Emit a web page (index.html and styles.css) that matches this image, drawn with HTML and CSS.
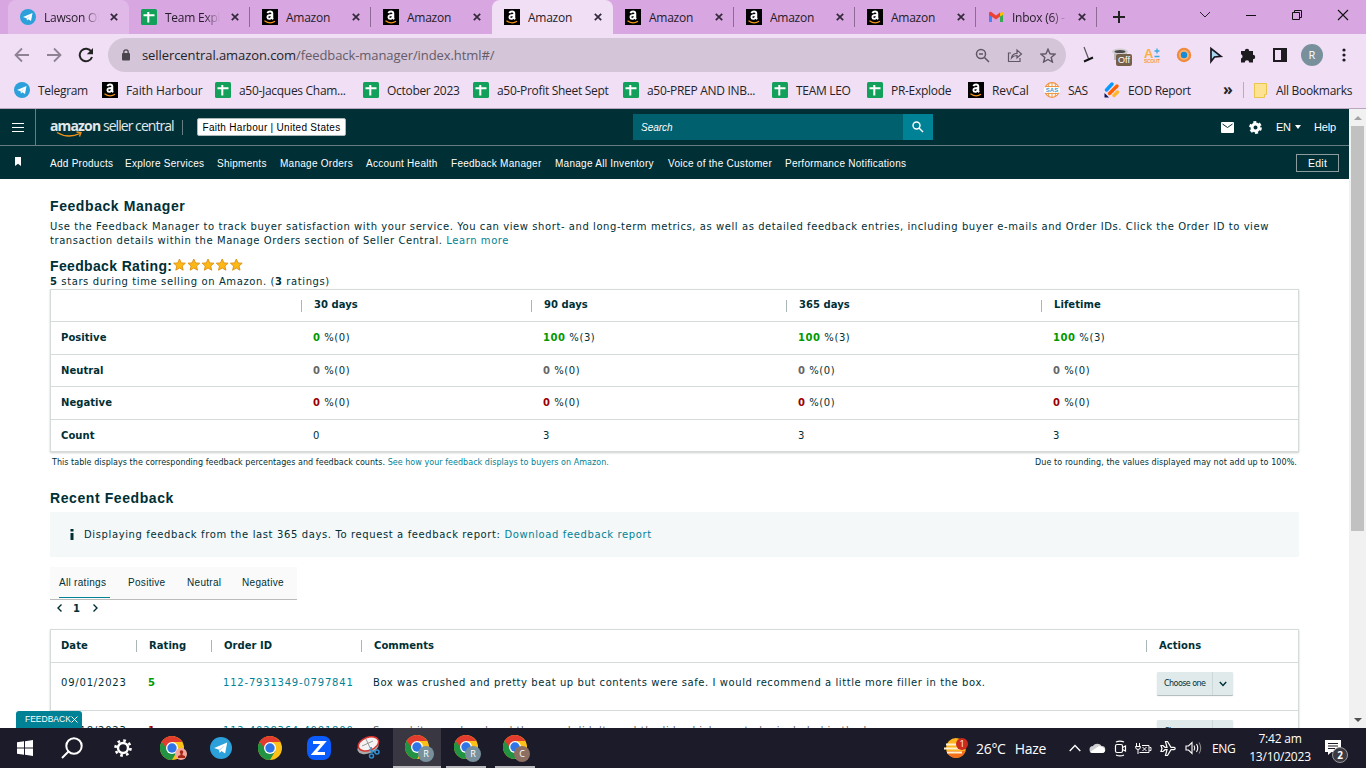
FILE: index.html
```
<!doctype html>
<html lang="en">
  <head>
    <meta charset="utf-8">
    <title>Feedback Manager</title>
    <link rel="stylesheet" href="styles.css">
  </head>
  <body>
    <!-- shared icons -->
    <svg class="defs" width="0" height="0">
      <symbol id="telegram" viewBox="0 0 16 16">
        <circle cx="8" cy="8" r="8" fill="#2ba0da"/>
        <path d="M3 8 L12.5 4 L11 12 L8.3 10.2 L7 11.6 L6.6 9.2 Z" fill="#fff"/>
        <path d="M6.6 9.2 L10.8 5.8 L7.4 9.6 Z" fill="#a9cfe6"/>
      </symbol>
      <symbol id="sheet" viewBox="0 0 16 16">
        <rect width="16" height="16" rx="1.5" fill="#12a05a"/>
        <path d="M2.5 6.2h11M7.3 3v10.5" stroke="#fff" stroke-width="2"/>
      </symbol>
      <symbol id="amz" viewBox="0 0 16 16">
        <rect width="16" height="16" fill="#000"/>
        <path d="M5.4 4.1Q6 2.5 8 2.5Q10.3 2.5 10.3 4.6V8.6Q10.3 9.6 11.2 10.2M10 6Q5.4 5.8 5.4 8.2Q5.6 10 7.4 9.9Q9.8 9.5 10 6.6" fill="none" stroke="#fff" stroke-width="1.9"/>
        <path d="M2.5 11.7Q8 15.6 13 12.2" fill="none" stroke="#f39418" stroke-width="1.2"/>
      </symbol>
      <symbol id="gmail" viewBox="0 0 16 12">
        <path d="M1 1.5V11h3V5z" fill="#4285f4"/>
        <path d="M15 1.5V11h-3V5z" fill="#34a853"/>
        <path d="M12 5.5V2.2L14 .8Q15 .8 15 2.5V4z" fill="#fbbc04"/>
        <path d="M1 4V2Q1.5 .3 3 .8L8 4.6 12 1.6V5.4L8 8.4z" fill="#ea4335"/>
      </symbol>
      <symbol id="close" viewBox="0 0 8 8">
        <path d="M.8.8l6.4 6.4M7.2.8L.8 7.2" stroke="#33293a" stroke-width="1.7"/>
      </symbol>
      <symbol id="chrome" viewBox="0 0 24 24">
        <circle cx="12" cy="12" r="12" fill="#fbc116"/>
        <path d="M1.6 6L6.8 15H12V6H22.4Q18 0 12 0Q5 0 1.6 6" fill="#e33b2e"/>
        <path d="M1.6 6A12 12 0 0 0 12 24L17.2 15 12 12H6.5z" fill="#229342"/>
        <circle cx="12" cy="12" r="6" fill="#fff"/>
        <circle cx="12" cy="12" r="4.7" fill="#2f75e8"/>
      </symbol>
    </svg>

    <div class="tabstrip">
      <div class="tab hover"><svg class="fav"><use href="#telegram"/></svg><span class="fade">Lawson Oh</span><svg class="x"><use href="#close"/></svg></div>
      <div class="tab line"><svg class="fav"><use href="#sheet"/></svg><span class="fade">Team Expl</span><svg class="x"><use href="#close"/></svg></div>
      <div class="tab line"><svg class="fav"><use href="#amz"/></svg><span>Amazon</span><svg class="x"><use href="#close"/></svg></div>
      <div class="tab"><svg class="fav"><use href="#amz"/></svg><span>Amazon</span><svg class="x"><use href="#close"/></svg></div>
      <div class="tab active"><svg class="fav"><use href="#amz"/></svg><span>Amazon</span><svg class="x"><use href="#close"/></svg></div>
      <div class="tab line"><svg class="fav"><use href="#amz"/></svg><span>Amazon</span><svg class="x"><use href="#close"/></svg></div>
      <div class="tab line"><svg class="fav"><use href="#amz"/></svg><span>Amazon</span><svg class="x"><use href="#close"/></svg></div>
      <div class="tab line"><svg class="fav"><use href="#amz"/></svg><span>Amazon</span><svg class="x"><use href="#close"/></svg></div>
      <div class="tab line"><svg class="fav gm"><use href="#gmail"/></svg><span class="fade">Inbox (6) -</span><svg class="x"><use href="#close"/></svg></div>
      <svg class="plus" width="12" height="12"><path d="M6 0v12M0 6h12" stroke="#222" stroke-width="2"/></svg>
      <div class="winbtns">
        <svg width="12" height="12"><path d="M1 3l5 5 5-5" fill="none" stroke="#222"/></svg>
        <svg width="12" height="12"><path d="M1 6.5h10" stroke="#111"/></svg>
        <svg width="12" height="12"><path d="M1.5 3.5h7v7h-7zM3.5 3.5v-2h7v7h-2" fill="none" stroke="#111"/></svg>
        <svg width="12" height="12"><path d="M1 1l10 10M11 1L1 11" stroke="#111" stroke-width="1.1"/></svg>
      </div>
    </div>

    <div class="toolbar">
      <div class="navbtns">
        <svg width="16" height="16" fill="none" stroke="#8f8295" stroke-width="1.8"><path d="M15 8H2M8 1.5L1.5 8 8 14.5"/></svg>
        <svg width="16" height="16" fill="none" stroke="#8f8295" stroke-width="1.8"><path d="M1 8h13M8 1.5L14.5 8 8 14.5"/></svg>
        <svg width="16" height="16"><path d="M13.3 4.5A6.3 6.3 0 1 0 14 10" fill="none" stroke="#222" stroke-width="2"/><path d="M15 1v6.2H8.800z" fill="#222"/></svg>
      </div>
      <div class="omnibox">
        <svg class="lock" width="8" height="12"><rect y="4" width="8" height="7.5" rx="1" fill="#4b4550"/><path d="M1.800 5V3a2.200 2.200 0 0 1 4.400 0v2" fill="none" stroke="#4b4550" stroke-width="1.3"/></svg>
        <div class="url">sellercentral.amazon.com<span>/feedback-manager/index.html#/</span></div>
        <div class="omniicons">
          <svg width="15" height="15" fill="none" stroke="#5f5765" stroke-width="1.5"><circle cx="6" cy="6" r="4.5"/><path d="M9.500 9.500L14 14M4 6h4"/></svg>
          <svg width="16" height="15" fill="none" stroke="#5f5765" stroke-width="1.2"><path d="M4 5H1.500V13.500H13V10M4.500 10Q5 5.500 10 5.300V2L14.500 6 10 10V7.500Q6.500 7.500 4.500 10z"/></svg>
          <svg width="16" height="15" fill="none" stroke="#5f5765" stroke-width="1.4"><path d="M8 1.200L10 5.800 15 6.200 11.200 9.500 12.400 14 8 11.500 3.600 14 4.800 9.500 1 6.200 6 5.800z"/></svg>
        </div>
      </div>
      <div class="exts">
        <svg width="16" height="18"><path d="M4 1l5 13" stroke="#555" stroke-width="1.2"/><path d="M4 15.500l9-4" stroke="#111" stroke-width="2"/></svg>
        <div class="offext">
          <svg width="18" height="16"><path d="M3 5h13v8H3z" fill="#bcb9ba"/><ellipse cx="9" cy="4.5" rx="8" ry="3" fill="#cfcdcd"/><ellipse cx="9" cy="4.5" rx="5.5" ry="1.6" fill="#4a484c"/></svg>
          <b>Off</b>
        </div>
        <svg width="16" height="16"><text x="0" y="10.500" class="sc1">A</text><path d="M10.500 4h5M13 1.500v5M10.500 9.500h5" stroke="#39a9e0" stroke-width="1.3"/><text x="0" y="15.500" class="sc2" textLength="16">SCOUT</text></svg>
        <svg width="16" height="16"><circle cx="8" cy="8" r="7.2" fill="#f08a3c"/><circle cx="8" cy="8" r="5" fill="#fbb26c"/><circle cx="8" cy="8" r="3.2" fill="#168cd8"/></svg>
        <svg width="16" height="18"><path d="M3 2.500V15.500L6.500 11 13 10.300z" fill="#a9d8f3" stroke="#1b1720" stroke-width="1.7"/></svg>
        <svg width="16" height="16"><path d="M1 4h3.800a2.200 2.200 0 1 1 4.400 0H13v3.800a2.200 2.200 0 1 1 0 4.400V15.500H9.200a2.200 2.200 0 0 0-4.400 0H1v-4a2.200 2.200 0 0 0 0-4.200z" fill="#1d1b20"/></svg>
        <svg width="14" height="14"><path d="M1 1h12v12H1z" fill="none" stroke="#1d1b20" stroke-width="2"/><path d="M8 1h5v12H8z" fill="#1d1b20"/></svg>
        <div class="avatar">R</div>
        <svg width="4" height="14" fill="#1d1b20"><circle cx="2" cy="2" r="1.6"/><circle cx="2" cy="7" r="1.6"/><circle cx="2" cy="12" r="1.6"/></svg>
      </div>
    </div>

    <div class="bookmarks">
      <div><svg class="fav"><use href="#telegram"/></svg>Telegram</div>
      <div><svg class="fav"><use href="#amz"/></svg>Faith Harbour</div>
      <div><svg class="fav"><use href="#sheet"/></svg>a50-Jacques Cham...</div>
      <div><svg class="fav"><use href="#sheet"/></svg>October 2023</div>
      <div><svg class="fav"><use href="#sheet"/></svg>a50-Profit Sheet Sept</div>
      <div><svg class="fav"><use href="#sheet"/></svg>a50-PREP AND INB...</div>
      <div><svg class="fav"><use href="#sheet"/></svg>TEAM LEO</div>
      <div><svg class="fav"><use href="#sheet"/></svg>PR-Explode</div>
      <div><svg class="fav"><use href="#amz"/></svg>RevCal</div>
      <div><svg class="fav" viewBox="0 0 16 16"><circle cx="8" cy="8" r="7.3" fill="#fff" stroke="#ef9443" stroke-width="1.2"/><path d="M1.500 4.500h13M1.500 11.500h13M8 1v14M5 1.500Q2.500 8 5 14.500M11 1.500Q13.500 8 11 14.500" fill="none" stroke="#ef9443"/><rect y="5.3" width="16" height="5.4" fill="#fff"/><text x="8" y="10.200" text-anchor="middle" class="sas">SAS</text></svg>SAS</div>
      <div><svg class="fav" viewBox="0 0 16 16"><g stroke-width="3.4" stroke-linecap="round"><path d="M2.500 8L8 2" stroke="#0a99ff"/><path d="M5.500 11.500L13 4" stroke="#ff6100"/><path d="M10 13.500L13.500 10" stroke="#ffb629"/></g><path d="M.5 11v4.500H5z" fill="#0a1551"/></svg>EOD Report</div>
      <div class="more">»</div>
      <div class="allbm"><svg width="13" height="15"><path d="M.5.5h12v11h-2v3H.5z" fill="#fde293" stroke="#e9c74d"/></svg>All Bookmarks</div>
    </div>

    <div class="view">
      <div class="page">
        <header>
          <div class="burger"><svg width="12" height="9"><path d="M0 .5h12M0 4.500h12M0 8.500h12" stroke="#fff"/></svg></div>
          <div class="brand">
            <div class="logo"><b>amazon</b> <span>seller central</span>
              <svg class="smile" width="28" height="7"><path d="M1 1.500Q12 8 24 2.500M20.500 1L25 1.500 23.500 5.500" fill="none" stroke="#f39418" stroke-width="1.3"/></svg>
            </div>
            <div class="bar"></div>
            <div class="account">Faith Harbour | United States</div>
          </div>
          <div class="search">
            <div class="field">Search</div>
            <div class="go"><svg width="12" height="12" fill="none" stroke="#fff" stroke-width="1.4"><circle cx="4.5" cy="4.5" r="3.5"/><path d="M7 7l4 4"/></svg></div>
          </div>
          <div class="tools">
            <svg width="13" height="11"><rect width="13" height="11" rx="1" fill="#fff"/><path d="M1.500 2L6.500 5.500 11.500 2" fill="none" stroke="#002f36"/></svg>
            <svg width="13" height="13"><circle cx="6.5" cy="6.5" r="3.5" fill="none" stroke="#fff" stroke-width="3"/><circle cx="6.5" cy="6.5" r="5.4" fill="none" stroke="#fff" stroke-width="2" stroke-dasharray="3 2.65"/></svg>
            <span class="lang">EN <i></i></span>
            <span class="help">Help</span>
          </div>
        </header>
        <nav>
          <div class="flag"><svg width="6" height="9"><path d="M0 0h6v9L3 6.800 0 9z" fill="#fff"/></svg></div>
          <div class="links">
            <a>Add Products</a><a>Explore Services</a><a>Shipments</a><a>Manage Orders</a><a>Account Health</a><a>Feedback Manager</a><a>Manage All Inventory</a><a>Voice of the Customer</a><a>Performance Notifications</a>
          </div>
          <div class="edit">Edit</div>
        </nav>

        <main>
          <h1>Feedback Manager</h1>
          <p class="intro">Use the Feedback Manager to track buyer satisfaction with your service. You can view short- and long-term metrics, as well as detailed feedback entries, including buyer e-mails and Order IDs. Click the Order ID to view<br>transaction details within the Manage Orders section of Seller Central. <a>Learn more</a></p>
          <h2 class="rating">Feedback Rating:
            <svg width="70" height="14" viewBox="0 0 70 14"><g fill="#fdb813" stroke="#dd8f12" stroke-width=".9">
              <path id="star" d="M6.500 1L8.200 4.900 12.400 5.200 9.200 8 10.200 12.200 6.500 10 2.800 12.200 3.800 8 .6 5.200 4.800 4.900z"/>
              <use href="#star" x="14.3"/><use href="#star" x="28.5"/><use href="#star" x="42.7"/><use href="#star" x="56.8"/>
            </g></svg>
          </h2>
          <p class="stars"><b>5</b> stars during time selling on Amazon. (<b>3</b> ratings)</p>

          <table class="stats">
            <colgroup><col class="s0"><col class="s1"><col class="s2"><col class="s2"><col></colgroup>
            <tr><th></th><th>30 days</th><th>90 days</th><th>365 days</th><th>Lifetime</th></tr>
            <tr><td><b>Positive</b></td><td><b class="pos">0</b> %(0)</td><td><b class="pos">100</b> %(3)</td><td><b class="pos">100</b> %(3)</td><td><b class="pos">100</b> %(3)</td></tr>
            <tr><td><b>Neutral</b></td><td><b class="neu">0</b> %(0)</td><td><b class="neu">0</b> %(0)</td><td><b class="neu">0</b> %(0)</td><td><b class="neu">0</b> %(0)</td></tr>
            <tr><td><b>Negative</b></td><td><b class="neg">0</b> %(0)</td><td><b class="neg">0</b> %(0)</td><td><b class="neg">0</b> %(0)</td><td><b class="neg">0</b> %(0)</td></tr>
            <tr><td><b>Count</b></td><td>0</td><td>3</td><td>3</td><td>3</td></tr>
          </table>
          <div class="notes">
            <span>This table displays the corresponding feedback percentages and feedback counts. <a>See how your feedback displays to buyers on Amazon.</a></span>
            <span class="round">Due to rounding, the values displayed may not add up to 100%.</span>
          </div>

          <h2 class="recent">Recent Feedback</h2>
          <div class="info"><svg width="4" height="11"><path d="M.5 0h3v2.500h-3zM.5 4h3v7h-3z" fill="#002f36"/></svg><span>Displaying feedback from the last 365 days. To request a feedback report: <a>Download feedback report</a></span></div>
          <div class="filters"><a class="on">All ratings</a><a>Positive</a><a>Neutral</a><a>Negative</a></div>
          <div class="pager">
            <svg width="5" height="8"><path d="M4.500.5L1 4l3.500 3.500" fill="none" stroke="#002f36" stroke-width="1.4"/></svg>
            <b>1</b>
            <svg width="5" height="8"><path d="M.5.5L4 4 .5 7.500" fill="none" stroke="#002f36" stroke-width="1.4"/></svg>
          </div>

          <table class="feedback">
            <colgroup><col class="f0"><col class="f1"><col class="f2"><col class="f3"><col></colgroup>
            <tr><th>Date</th><th>Rating</th><th>Order ID</th><th>Comments</th><th>Actions</th></tr>
            <tr><td class="num">09/01/2023</td><td><b class="pos">5</b></td><td class="num"><a>112-7931349-0797841</a></td><td>Box was crushed and pretty beat up but contents were safe. I would recommend a little more filler in the box.</td>
              <td><div class="choose"><span>Choose one</span><i><svg width="8" height="6"><path d="M.8 1L4 4.500 7.200 1" fill="none" stroke="#002f36" stroke-width="1.4"/></svg></i></div></td></tr>
            <tr><td class="num">08/18/2023</td><td><b class="neg">1</b></td><td class="num"><a>112-4028364-4081800</a></td><td class="neu">Second item ordered and they send didn't send the lid, which was to be included in the box.</td>
              <td><div class="choose"><span>Choose one</span><i></i></div></td></tr>
          </table>
        </main>
        <div class="fbtab">FEEDBACK <svg width="7" height="7"><path d="M.5.5l6 6M6.500.5l-6 6" stroke="#fff"/></svg></div>
      </div>
      <div class="scroll"><i class="up"></i><div class="thumb"></div><i class="down"></i></div>
    </div>

    <div class="taskbar">
      <div class="apps">
        <div><svg width="16" height="16" fill="#fff"><path d="M0 2.300l7-1v6.200H0zM8 1.200L16 0v7.500H8zM0 8.500h7v6.200l-7-1zM8 8.500h8V16l-8-1.200z"/></svg></div>
        <div class="find"><svg width="22" height="22" fill="none" stroke="#fff" stroke-width="2"><circle cx="13" cy="9" r="7.7"/><path d="M7.500 14.500L1 21"/></svg></div>
        <div><svg width="18" height="18" viewBox="0 0 18 18"><circle cx="9" cy="9" r="5" fill="none" stroke="#fff" stroke-width="2.4"/><circle cx="9" cy="9" r="7.5" fill="none" stroke="#fff" stroke-width="2.6" stroke-dasharray="2.7 3.19"/></svg></div>
        <div class="app"><svg width="24" height="24"><use href="#chrome"/></svg><em class="red"><svg width="7" height="8" fill="#a52714"><circle cx="3.5" cy="2" r="1.8"/><path d="M2.500 3h2v2L7 6v2H0V6l2.500-1z"/></svg></em></div>
        <div><svg width="22" height="22"><use href="#telegram"/></svg></div>
        <div><svg width="24" height="24"><use href="#chrome"/></svg></div>
        <div><svg width="24" height="24"><rect width="24" height="24" rx="8" fill="#0b5cff"/><path d="M6 6.500H16.500L7 17.500H18" fill="none" stroke="#fff" stroke-width="3"/></svg></div>
        <div><svg width="24" height="24"><ellipse cx="12" cy="11" rx="11" ry="6.5" fill="#aaa" transform="rotate(-20 12 11)"/><ellipse cx="12.5" cy="8" rx="10.5" ry="6.5" fill="#f4f2f2" stroke="#d9342f" stroke-width="1.5" transform="rotate(-20 12 8)"/><path d="M10 3l6 13M6 10l11-5" stroke="#999"/><g fill="none" stroke="#2f8fd0" stroke-width="1.5"><path d="M13 14l6 2M15 11l1 6"/><circle cx="21" cy="16" r="2"/><circle cx="15.5" cy="20" r="2"/></g></svg></div>
        <div class="app cur"><svg width="24" height="24"><use href="#chrome"/></svg><em>R</em></div>
        <div class="app open"><svg width="24" height="24"><use href="#chrome"/></svg><em>R</em></div>
        <div class="app open"><svg width="24" height="24"><use href="#chrome"/></svg><em class="brown">C</em></div>
      </div>
      <div class="weather">
        <svg width="26" height="22"><circle cx="12" cy="11" r="10" fill="#ffb51e"/><path d="M2.500 14a10 10 0 0 0 19 0z" fill="#f2701c"/><path d="M2 7.500h12M0 11.500h17M3 15.500h15" stroke="#fff0cf" stroke-width="1.8"/><circle cx="18" cy="7" r="6" fill="#cb2a1e"/><text x="18" y="10" text-anchor="middle" class="one">1</text></svg>
        <span>26°C</span><span>Haze</span>
      </div>
      <div class="tray">
        <svg width="12" height="8"><path d="M.7 7L6 1.500 11.300 7" fill="none" stroke="#fff" stroke-width="1.3"/></svg>
        <svg width="17" height="12"><path d="M4 11a3.500 3.500 0 0 1 0-7A5 5 0 0 1 12.500 4 3.500 3.500 0 0 1 13 11z" fill="#cfcfd2"/><path d="M1 10L10 4Q16 5 16 9 15.500 11 13 11H4Q2 11 1 10z" fill="#fff"/></svg>
        <svg width="13" height="17" fill="none" stroke="#fff" stroke-width="1.2"><rect x="1.5" y="4.5" width="7" height="8" rx="1.5"/><path d="M8.500 7.500l3-1.500v5l-3-1.500M2 2Q6 .2 10 2M2 15Q6 16.800 10 15"/></svg>
        <svg width="17" height="13" fill="none" stroke="#fff"><path d="M7 3.500H14v7H4.500M14.500 5.500h1.500v3h-1.500M7.500 5l4 4M11.500 5L7.500 9M1.500 1v3M4.500 1v3M.5 4.500h5Q5.500 7.500 3 7.500 .5 7.500 .5 4.500M3 7.500V12" /></svg>
        <svg width="17" height="17" fill="none" stroke="#fff" stroke-width="1.2"><path d="M1 5.500h2L5 7.300H7L5.500 1.500H7.500L11 7.300H14Q16.500 8.500 14 9.700H11L7.500 15.500H5.500L7 9.700H5L3 11.500H1L2 8.500z"/></svg>
        <svg width="17" height="14" fill="none" stroke="#fff" stroke-width="1.1"><path d="M1 5h2.500L7 1.500v11L3.500 9H1zM9 4.500Q10.500 7 9 9.500M11.500 3Q14 7 11.500 11"/><path d="M14 1.500Q17.500 7 14 12.500" stroke="#888"/></svg>
        <span>ENG</span>
      </div>
      <div class="clock">7:42 am<br>13/10/2023</div>
      <div class="notif"><svg width="18" height="16"><path d="M0 0h16v12H6.500L3 15v-3H0z" fill="#fff"/><path d="M3 3.500h10M3 6h10M3 8.500h7" stroke="#1c1b29"/></svg><em>2</em></div>
    </div>
  </body>
</html>
```

FILE: styles.css
```
*{box-sizing:border-box;}
body{
  margin:0; width:1366px; height:768px; overflow:hidden;
  display:flex; flex-direction:column;
  font-family:"Open Sans","Noto Sans",sans-serif; font-size:12px; color:#002f36;
  background:#fff;
}
svg{flex:none; display:block;}
svg.defs{position:absolute;}
h1,h2,p{margin:0;}
a{color:#008296;}
.fav{width:16px; height:16px;}

/* browser tabs */
.tabstrip{
  height:34px; flex:none; display:flex; align-items:center;
  background:#d8a6e1; padding-left:8px; color:#241c28;
}
.tab{
  width:121px; height:34px; flex:none; display:flex; align-items:center;
  padding-left:12px;
}
.tab span{width:55px; margin:0 7px 0 8px; white-space:nowrap; overflow:hidden; letter-spacing:-.25px;}
.tab .fade{-webkit-mask-image:linear-gradient(90deg,#000 72%,transparent);}
.tab .x{width:8px; height:8px; margin-left:4px;}
.tab.hover{background:#e1b9e9; border-radius:8px 8px 0 0;}
.tab.active{background:#f1dff5; border-radius:8px 8px 0 0;}
.tab.line{background:linear-gradient(#8d6b95,#8d6b95) right 0 top 7px/1px 20px no-repeat;}
.fav.gm{height:12px;}
.plus{margin-left:16px;}
.winbtns{margin-left:auto; display:flex; gap:34px; padding:0 17px 5px 0;}

.toolbar{height:38px; flex:none; background:#f1dff5; display:flex; align-items:center; padding-top:4px;}
.navbtns{width:108px; display:flex; gap:16px; padding-left:14px;}
.omnibox{
  width:958px; height:34px; border-radius:17px; background:#d4c5d8;
  display:flex; align-items:center; padding:0 10px 0 14px;
}
.url{font-size:13px; margin-left:12px; color:#241f28; white-space:nowrap; letter-spacing:-.08px;}
.url span{color:#655b69;}
.omniicons{margin-left:auto; display:flex; gap:17px;}
.exts{
  flex:1; display:grid; align-items:center; justify-items:center;
  grid-template-columns:repeat(9,32px); padding-left:6px;
}
.offext{position:relative;}
.offext b{
  position:absolute; left:5px; top:7px; width:16px; height:12px; border-radius:2px;
  background:#75604a; color:#fff; font:9px/12px "Liberation Sans",sans-serif; text-align:center;
}
.sc1{font:bold 13px "Liberation Sans",sans-serif; fill:#fbb03b;}
.sc2{font:bold 5px "Liberation Sans",sans-serif; fill:#fba03b;}
.avatar{width:22px; height:22px; border-radius:50%; background:#78909c; color:#fff; text-align:center; line-height:22px; font-size:11px;}

.bookmarks{
  height:37px; flex:none; background:#f1dff5; border-bottom:1px solid #b9a8bd; color:#241f28;
  display:grid; align-items:center; padding-left:14px; white-space:nowrap;
  grid-template-columns:88px 113px 148px 110px 150px 149px 95px 101px 76px 60px 119px 30px 1fr;
  letter-spacing:-.3px;
}
.bookmarks>div{display:flex; align-items:center; gap:8px;}
.sas{font:bold 6px "Liberation Sans",sans-serif; fill:#2a9fd8; letter-spacing:0;}
.bookmarks>div:nth-child(2),.bookmarks>div:nth-child(9){letter-spacing:-.1px;}
.bookmarks .more{font-weight:bold; font-size:16px; padding-bottom:3px;}
.bookmarks .allbm{border-left:1px solid #bba9c0; height:16px; padding-left:10px; gap:9px; margin-left:-10px;}

/* seller central */
.view{height:619px; flex:none; display:flex;}
.page{width:1349px; height:619px; overflow:hidden; position:relative; font-family:"DejaVu Sans",Verdana,sans-serif; background:#fff;}
header{height:37px; background:#002f36; border-bottom:1px solid #667d81; display:flex; align-items:center; color:#fff;}
.burger{width:36px; height:36px; border-right:1px solid #667d81; padding:14px 0 0 12px;}
.brand{width:597px; display:flex; align-items:center; padding-left:14px;}
.logo{position:relative; width:119px; font:14px/18px "Open Sans",sans-serif; letter-spacing:-.95px; white-space:nowrap; margin-top:-3px; color:#e3e9ea;}
.logo b{letter-spacing:-.85px;}
.smile{position:absolute; left:6px; top:14px;}
.bar{width:1px; height:15px; background:#667d81; margin:0 14px 0 13px;}
.account{
  width:149px; height:18px; border:1px solid #aab7b8; border-radius:2px; background:#fff; color:#000;
  font:10px/17px "Liberation Sans",sans-serif; letter-spacing:.3px; text-align:center; white-space:nowrap;
}
.search{width:300px; height:26px; display:flex;}
.field{width:270px; background:#00606e; font:italic 10px/27px "Liberation Sans",sans-serif; padding-left:8px;}
.go{width:30px; background:#008296; display:flex; align-items:center; justify-content:center;}
.tools{margin-left:auto; padding-right:13px; display:flex; align-items:center; font:11px "Liberation Sans",sans-serif;}
.tools svg+svg{margin:0 14px 0 15px;}
.lang{display:flex; align-items:center; gap:4px; width:38px; letter-spacing:-.3px;}
.lang i{border:3px solid transparent; border-top:4px solid #fff; border-bottom:0;}
.help{width:22px; letter-spacing:-.2px;}
nav{height:33px; background:#002f36; color:#fff; display:flex; align-items:center; font:10px "Liberation Sans",sans-serif; letter-spacing:.27px;}
nav a{color:#fff;}
.flag{width:50px; padding:0 0 3px 15px;}
.links{display:grid; grid-template-columns:75px 92px 63px 86px 85px 104px 113px 117px 130px; white-space:nowrap; padding-top:2px;}
.edit{width:43px; height:18px; border:1px solid #8b9c9f; margin-left:auto; margin-right:10px; line-height:16px; text-align:center; font-size:10.500px;}

main{padding:19px 50px 0; font-size:10px; letter-spacing:.570px;}
h1,h2{font:bold 14px/16px "Liberation Sans",sans-serif; letter-spacing:.58px;}
.intro{line-height:14px; margin-top:6px; white-space:nowrap;}
.rating{display:flex; gap:1px; margin-top:10px; letter-spacing:.35px;}
.stars{line-height:14px; height:14px; margin-top:1px; letter-spacing:.6px;}
table{width:1249px; border-collapse:separate; border-spacing:0; table-layout:fixed; border:1px solid #d5dbdb; box-shadow:0 1px 2px #ccc;}
th,td{padding:0 0 0 12px; text-align:left; white-space:nowrap;}
th{
  height:31px; font-weight:bold; padding:0 0 2px 13px; letter-spacing:.05px;
  background:linear-gradient(#aab7b8,#aab7b8) 0 50%/1px 12px no-repeat;
}
th:first-child,td:first-child{background:none; padding-left:10px;}
td{border-top:1px solid #d5dbdb; height:32.5px;}
td:first-child b{letter-spacing:.05px;}
.s0{width:250px;} .s1{width:230px;} .s2{width:255px;}
.f0{width:85px;} .f1{width:75px;} .f2{width:150px;} .f3{width:785px;}
.pos{color:#090;} .neu{color:#666;} .neg{color:#900;}
.num{letter-spacing:.8px;}
.notes{display:flex; justify-content:space-between; font-size:8px; line-height:12px; margin:5px 2px 0; letter-spacing:.04px;}
.round{letter-spacing:.08px;}
.recent{margin-top:21px;}
.info{height:45px; margin-top:6px; background:#f4f8f9; display:flex; align-items:center; padding-left:20px; gap:10px; letter-spacing:.62px;}
.filters{
  width:247px; height:33px; margin-top:10px; background:#fafafa; border-bottom:1px solid #bbb;
  display:grid; grid-template-columns:69px 59px 55px 50px; padding-left:9px;
  font:10px/32px "Liberation Sans",sans-serif; letter-spacing:.3px;
}
.filters a{color:#002f36;}
.filters .on{width:51px; height:31px; border-bottom:1px solid #008296;}
.pager{display:flex; align-items:center; gap:10px; height:16px; padding-left:7px;}
.pager b{font-size:10px; width:11px; padding-left:1px;}
.feedback{margin-top:13px;}
.feedback th{height:32px;}
.feedback td{height:48px; padding-bottom:8px;}
.feedback td:last-child{padding-bottom:0; vertical-align:top; padding-top:9px;}
.choose{width:76px; height:23px; background:#e0eaea; border-radius:1px; box-shadow:0 1px 1px #aab7b8; display:flex; font-size:8px; letter-spacing:-.55px; line-height:23px; margin-left:-1px;}
.choose span{width:55px; padding-left:7px;}
.choose i{flex:1; border-left:1px solid #ccd8d9; padding:9px 0 0 6px;}
.fbtab{
  position:absolute; left:16px; bottom:0; width:66px; height:17px; border-radius:3px 3px 0 0;
  background:#008296; color:#fff; font:8.5px/17px "Liberation Sans",sans-serif; padding-left:9px;
  display:flex; align-items:center;
}
.fbtab svg{margin-left:auto; margin-right:5px;}
.scroll{width:17px; background:#f1f1f1; display:flex; flex-direction:column; align-items:center; padding:7px 0 6px;}
.scroll .up{border:4px solid transparent; border-bottom-color:#a3a3a3; border-top:0;}
.scroll .down{border:4px solid transparent; border-top-color:#505050; border-bottom:0; margin-top:auto;}
.thumb{width:13px; height:405px; background:#c1c1c1; margin-top:6px;}

/* windows taskbar */
.taskbar{height:40px; flex:none; background:#1c1b29; display:flex; color:#fff;}
.apps{display:grid; grid-template-columns:repeat(11,49px); width:944px;}
.apps>div{height:40px; display:flex; align-items:center; justify-content:center; position:relative;}
.apps .find{padding-right:4px;}
.apps em{
  position:absolute; left:23px; top:18px; width:16px; height:16px; border-radius:50%;
  background:#78909c; color:#fff; font:9px/16px "Open Sans",sans-serif; text-align:center;
}
.apps em.red{left:28px; width:12px; height:12px; top:20px; background:#f3a79c; padding:2px 0 0 2.5px;}
.apps em.brown{background:#8d6e63;}
.apps .cur{background:#393842; border-bottom:2px solid #b9b8bc; width:48px; margin-left:1px;}
.apps .open{border-bottom:2px solid #b9b8bc; width:40px; margin-left:5px;}
.apps .cur em{left:25px;}
.apps .cur svg,.apps .open svg{margin-top:-1px;}
.apps .open em{left:19px;}
.weather{display:flex; align-items:center; font-size:14px; width:125px; white-space:nowrap; letter-spacing:-.3px;}
.weather span{margin-left:6px;}
.weather span+span{margin-left:9px;}
.one{font:9px "Open Sans",sans-serif; fill:#fff;}
.tray{display:flex; align-items:center; gap:8px; width:168px;}
.tray span{margin-left:2px; letter-spacing:-.3px;}
.clock{width:86px; text-align:center; line-height:18px; padding-top:2px; letter-spacing:-.2px;}
.notif{position:relative; padding:12px 0 0 2px;}
.notif em{
  position:absolute; left:9px; top:19px; width:16px; height:16px; border-radius:50%; background:#3b3a44;
  border:1px solid #999; font:bold 10px/14px "Open Sans",sans-serif; text-align:center;
}
```
